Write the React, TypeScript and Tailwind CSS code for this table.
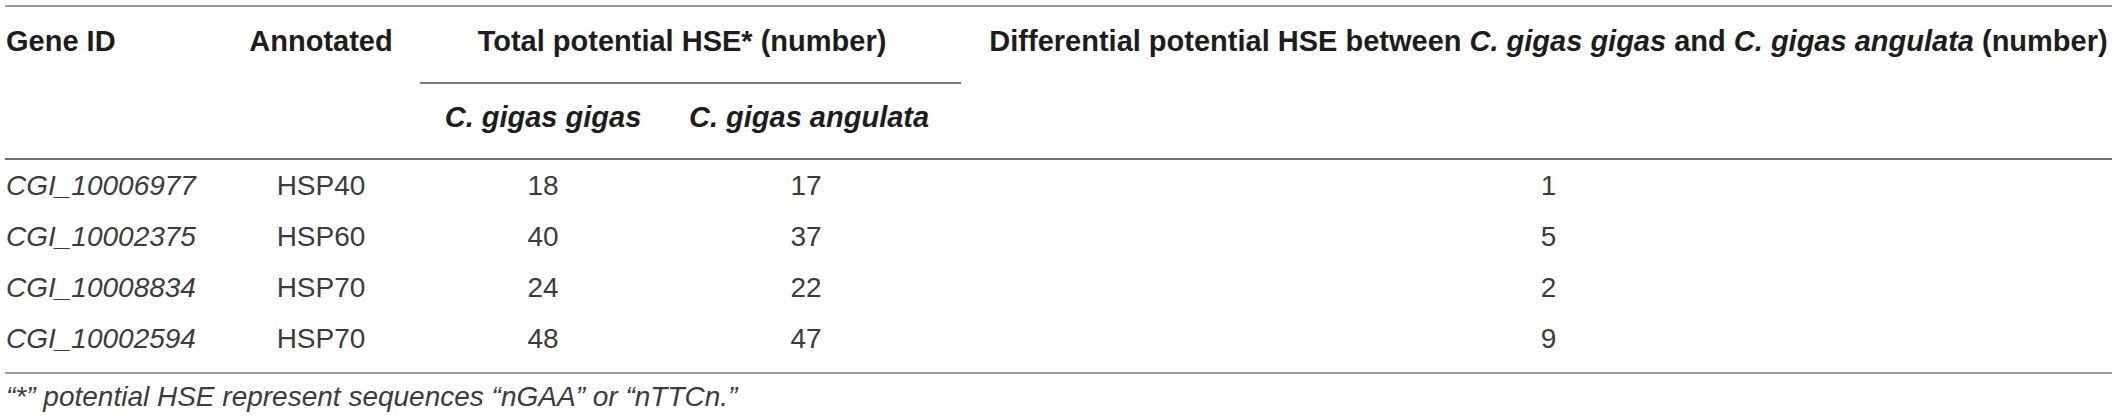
const rows = [
  { id: "CGI_10006977", annotated: "HSP40", gigas: 18, angulata: 17, diff: 1 },
  { id: "CGI_10002375", annotated: "HSP60", gigas: 40, angulata: 37, diff: 5 },
  { id: "CGI_10008834", annotated: "HSP70", gigas: 24, angulata: 22, diff: 2 },
  { id: "CGI_10002594", annotated: "HSP70", gigas: 48, angulata: 47, diff: 9 },
];

const cols = "grid grid-cols-[240px_152px_292px_234px_1189px]";

export default function App() {
  return (
    <div
      className="min-h-[420px] bg-white pt-[5px] text-[28px]"
      style={{ fontFamily: '"Liberation Sans", Arial, sans-serif' }}
    >
      <div className="mx-[5px] w-[2107px]">
        <div className="border-t-2 border-[#9a9a9a]">
          {/* header */}
          <div
            className={`${cols} grid-rows-[auto_auto] border-b-2 border-[#6e6e6e] text-[29px] font-bold leading-[28px] whitespace-nowrap text-[#1d1d1d]`}
          >
            <div className="row-span-2 pt-[20px] pl-px">Gene ID</div>
            <div className="row-span-2 pt-[20px] text-center">Annotated</div>
            <div className="col-span-2 pt-[20px]">
              <div className="pl-[44px] text-center">
                Total potential HSE* (number)
              </div>
              <div className="mt-[27px] mr-[-38px] ml-[23px] h-[2px] bg-[#7a7a7a]" />
            </div>
            <div className="row-span-2 col-start-5 row-start-1 pt-[20px] pl-[62px] text-center">
              Differential potential HSE between <i>C. gigas gigas</i> and{" "}
              <i>C. gigas angulata</i> (number)
            </div>
            <div className="col-start-3 row-start-2 pt-[19px] pb-[27px] text-center italic">
              C. gigas gigas
            </div>
            <div className="col-start-4 row-start-2 pt-[19px] pb-[27px] text-center italic">
              C. gigas angulata
            </div>
          </div>

          {/* body */}
          <div className="border-b-2 border-[#9a9a9a] pb-[8px] leading-[51px] text-[#3c3c3c]">
            {rows.map((row) => (
              <div key={row.id} className={cols}>
                <div className="pl-px italic">{row.id}</div>
                <div className="text-center">{row.annotated}</div>
                <div className="text-center">{row.gigas}</div>
                <div className="text-center">{row.angulata}</div>
                <div className="pl-[62px] text-center">{row.diff}</div>
              </div>
            ))}
          </div>
        </div>

        <p className="mt-[9px] pl-px leading-[28px] italic text-[#3c3c3c]">
          “*” potential HSE represent sequences “nGAA” or “nTTCn.”
        </p>
      </div>
    </div>
  );
}
